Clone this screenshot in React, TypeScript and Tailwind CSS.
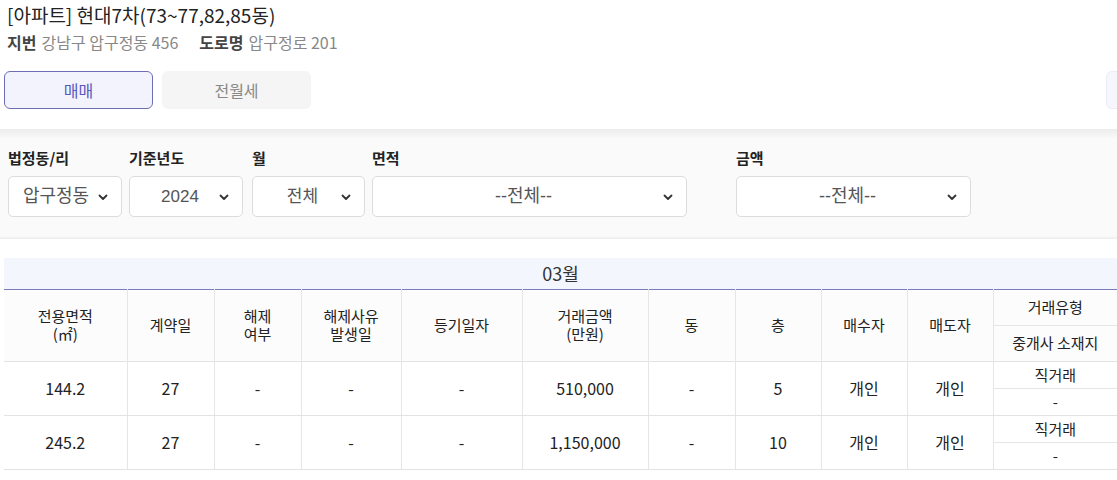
import React from "react";

const font = { fontFamily: '"Noto Sans CJK KR", "Noto Sans", sans-serif' };

function Chevron() {
  return (
    <svg width="12" height="12" viewBox="0 0 12 12" className="shrink-0">
      <path d="M2.5 4.5 L6 8 L9.5 4.5" fill="none" stroke="#333" strokeWidth="1.8" strokeLinecap="round" strokeLinejoin="round" />
    </svg>
  );
}

function Select({ w, text, size, pl }: { w: string; text: string; size: string; pl?: string }) {
  return (
    <div className={`${w} h-[41px] bg-white border border-[#dcdcdc] rounded-[5px] flex items-center ${pl ?? "pl-3"} pr-3`}>
      <span className={`flex-1 text-center ${size} text-[#555]`} style={{ fontFamily: '"Liberation Sans", "Noto Sans CJK KR", sans-serif' }}>{text}</span>
      <Chevron />
    </div>
  );
}

function Field({ label, w, text, ml, size, pl }: { label: string; w: string; text: string; ml?: string; size?: string; pl?: string }) {
  return (
    <div className={`flex flex-col ${ml ?? ""}`}>
      <div className="text-[15px] font-bold text-[#222] h-[20px] leading-[20px] mb-[8px]">{label}</div>
      <Select w={w} text={text} size={size ?? "text-[17px]"} pl={pl} />
    </div>
  );
}

const cols = [123, 87, 87, 100, 121, 126, 87, 86, 86, 86, 124];

export default function App() {
  const rows = [
    ["144.2", "27", "-", "-", "-", "510,000", "-", "5", "개인", "개인"],
    ["245.2", "27", "-", "-", "-", "1,150,000", "-", "10", "개인", "개인"],
  ];
  const th = "border-r border-[#e6e6e6] font-normal text-[15px] text-[#222] leading-[18px] text-center align-middle";
  const td = "border-r border-[#e6e6e6] border-b border-b-[#e3e3e3] text-[16px] text-[#222] text-center align-middle";
  return (
    <div className="w-[1117px] h-[480px] overflow-hidden bg-white" style={font}>
      <div className="px-[7px] pt-[2px]">
        <div className="text-[19px] text-[#222] leading-[26px]">[아파트] 현대7차(73~77,82,85동)</div>
        <div className="text-[16px] leading-[22px] mt-[3px] flex">
          <span className="font-bold text-[#444]">지번</span>
          <span className="text-[#888] ml-[5px]">강남구 압구정동 456</span>
          <span className="font-bold text-[#444] ml-[21px]">도로명</span>
          <span className="text-[#888] ml-[5px]">압구정로 201</span>
        </div>
      </div>
      <div className="flex items-center mt-[18px] pl-[4px] relative h-[38px]">
        <div className="w-[149px] h-[38px] rounded-[6px] border border-[#6e6eb4] bg-[#f3f3fd] flex items-center justify-center text-[16px] text-[#5858c0]">매매</div>
        <div className="w-[149px] h-[38px] rounded-[6px] bg-[#f5f5f5] ml-[9px] flex items-center justify-center text-[16px] text-[#888]">전월세</div>
        <div className="absolute right-[-10px] top-0 w-[21px] h-[38px] rounded-[6px] border border-[#ececf8] bg-[#f6f6fd]" />
      </div>
      <div className="mt-[20px] h-[110px] bg-[#fafafa] relative">
        <div className="absolute left-0 right-0 top-0 h-[10px] bg-gradient-to-b from-[#ececec] to-[#fafafa]" />
        <div className="absolute left-0 right-0 bottom-0 h-[3px] bg-gradient-to-t from-[#ececec] to-[#fafafa]" />
        <div className="relative flex pl-[8px] pt-[19px]">
          <Field label="법정동/리" w="w-[114px]" text="압구정동" size="text-[18px]" pl="pl-[6px]" />
          <Field label="기준년도" w="w-[114px]" text="2024" ml="ml-[7px]" />
          <Field label="월" w="w-[113px]" text="전체" ml="ml-[9px]" />
          <Field label="면적" w="w-[315px]" text="--전체--" ml="ml-[7px]" size="text-[18px]" />
          <Field label="금액" w="w-[235px]" text="--전체--" ml="ml-[49px]" size="text-[18px]" />
        </div>
      </div>
      <div className="pl-[4px] mt-[19px]">
        <table className="table-fixed border-collapse" style={{ width: 1113 }}>
          <colgroup>
            {cols.map((c, i) => (
              <col key={i} style={{ width: c }} />
            ))}
          </colgroup>
          <thead>
            <tr className="h-[31px] bg-[#f4f6fd] border-b border-[#7a7db5]">
              <th colSpan={11} className="font-normal text-[18px] text-[#333] text-center">03월</th>
            </tr>
            <tr className="h-[36px] bg-[#fcfcfc]">
              <th rowSpan={2} className={th}>전용면적<br />(㎡)</th>
              <th rowSpan={2} className={th}>계약일</th>
              <th rowSpan={2} className={th}>해제<br />여부</th>
              <th rowSpan={2} className={th}>해제사유<br />발생일</th>
              <th rowSpan={2} className={th}>등기일자</th>
              <th rowSpan={2} className={th}>거래금액<br />(만원)</th>
              <th rowSpan={2} className={th}>동</th>
              <th rowSpan={2} className={th}>층</th>
              <th rowSpan={2} className={th}>매수자</th>
              <th rowSpan={2} className={th}>매도자</th>
              <th className="font-normal text-[15px] text-[#222] text-center border-b border-[#e6e6e6]">거래유형</th>
            </tr>
            <tr className="h-[36px] bg-[#fcfcfc] border-b border-[#e3e3e3]">
              <th className="font-normal text-[15px] text-[#222] text-center">중개사 소재지</th>
            </tr>
          </thead>
          <tbody>
            {rows.map((r, ri) => (
              <React.Fragment key={ri}>
                <tr className="h-[27px]">
                  {r.map((v, i) => (
                    <td key={i} rowSpan={2} className={td}>{v}</td>
                  ))}
                  <td className="text-[15px] text-[#222] text-center border-b border-[#e6e6e6] leading-[20px]">직거래</td>
                </tr>
                <tr className="h-[27px] border-b border-[#e3e3e3]">
                  <td className="text-[15px] text-[#222] text-center leading-[20px]">-</td>
                </tr>
              </React.Fragment>
            ))}
          </tbody>
        </table>
      </div>
    </div>
  );
}
